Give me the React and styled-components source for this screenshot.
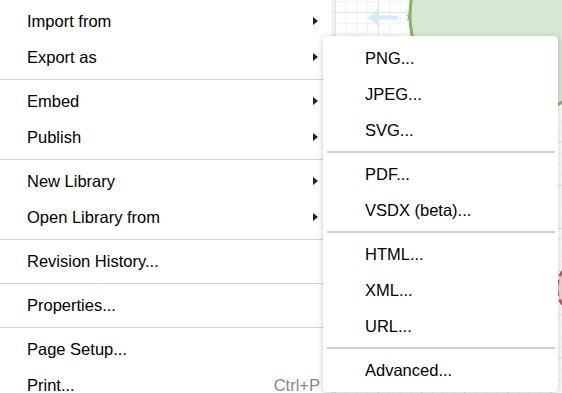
import styled, { createGlobalStyle } from 'styled-components';

const GlobalStyle = createGlobalStyle`
  html, body {
    margin: 0;
    padding: 0;
    overflow: hidden;
    background: #fff;
  }
  body {
    font-family: 'Liberation Sans', Arial, sans-serif;
  }
`;

const Stage = styled.div`
  position: relative;
  width: 562px;
  height: 393px;
  overflow: hidden;
  display: grid;
  grid-template-columns: 332px 1fr;
`;

const Menu = styled.div`
  background: #fff;
  padding-top: 3px;
  box-shadow: 1px 0 3px rgba(0, 0, 0, 0.12);
  z-index: 1;
`;

const Item = styled.div`
  height: 36px;
  display: flex;
  align-items: center;
  justify-content: space-between;
  padding: 0 ${(p) => (p.$shortcut ? '12px' : '14px')} 0 27px;
  font-size: 16.5px;
  color: #000;
  white-space: nowrap;
`;

const Arrow = styled.span`
  width: 0;
  height: 0;
  border-left: 5px solid #222;
  border-top: 4.5px solid transparent;
  border-bottom: 4.5px solid transparent;
`;

const Shortcut = styled.span`
  color: #888;
`;

const Divider = styled.div`
  height: 1px;
  margin: 4px 0 3px;
  background: #d4d4d4;
`;

const Canvas = styled.div`
  position: relative;
  background-color: #fff;
  background-image:
    linear-gradient(to right, #e2e2e2 1px, transparent 1px),
    linear-gradient(to bottom, #e2e2e2 1px, transparent 1px),
    linear-gradient(to right, #f1f1f1 1px, transparent 1px),
    linear-gradient(to bottom, #f1f1f1 1px, transparent 1px);
  background-size: 43.2px 43.2px, 43.2px 43.2px, 10.8px 10.8px, 10.8px 10.8px;
  background-position: 2.8px 12px, 2.8px 12px, 2.8px 12px, 2.8px 12px;
`;

const Shapes = styled.svg`
  display: block;
  width: 100%;
  height: 100%;
`;

const SubMenu = styled.div`
  position: absolute;
  left: 323px;
  top: 36px;
  width: 235px;
  height: 356px;
  box-sizing: border-box;
  padding-top: 4px;
  background: #fff;
  border-radius: 4px;
  box-shadow: 0 1px 6px rgba(0, 0, 0, 0.22);
  z-index: 2;
`;

const SubItem = styled.div`
  height: 36px;
  display: flex;
  align-items: center;
  padding-left: 42px;
  font-size: 16.5px;
  color: #000;
  white-space: nowrap;
`;

const SubDivider = styled.div`
  height: 2px;
  margin: 3px 3px 3px 4px;
  background: #cfcfcf;
`;

const mainMenu = [
  { label: 'Import from', sub: true },
  { label: 'Export as', sub: true },
  '-',
  { label: 'Embed', sub: true },
  { label: 'Publish', sub: true },
  '-',
  { label: 'New Library', sub: true },
  { label: 'Open Library from', sub: true },
  '-',
  { label: 'Revision History...' },
  '-',
  { label: 'Properties...' },
  '-',
  { label: 'Page Setup...' },
  { label: 'Print...', shortcut: 'Ctrl+P' },
];

const exportMenu = [
  'PNG...',
  'JPEG...',
  'SVG...',
  '-',
  'PDF...',
  'VSDX (beta)...',
  '-',
  'HTML...',
  'XML...',
  'URL...',
  '-',
  'Advanced...',
];

const CanvasShapes = () => (
  <Shapes viewBox="0 0 230 393">
    {/* faded edge arrow */}
    <path
      d="M36 12.5 L46 4 L46 10.5 L66 10.5 L66 14.5 L46 14.5 L46 21 Z"
      fill="#cfeaf9"
      opacity="0.9"
    />
    <path d="M75.5 10 L80.5 15 M80.5 10 L75.5 15" stroke="#29b6f2" strokeWidth="1.6" />
    {/* green ellipse */}
    <circle cx="179" cy="10" r="101" fill="#d5e8d4" stroke="#82b366" strokeWidth="3" />
    {/* red dashed shapes */}
    <circle
      cx="253"
      cy="283"
      r="28"
      fill="#f8cecc"
      stroke="#b85450"
      strokeWidth="2.5"
      strokeDasharray="6 4"
    />
    <circle
      cx="72"
      cy="412"
      r="21"
      fill="#f8cecc"
      stroke="#b85450"
      strokeWidth="2.5"
      strokeDasharray="6 4"
    />
  </Shapes>
);

const App = () => {
  return (
    <>
      <GlobalStyle />
      <Stage>
        <Menu>
          {mainMenu.map((entry, i) =>
            entry === '-' ? (
              <Divider key={i} />
            ) : (
              <Item key={i} $shortcut={!!entry.shortcut}>
                <span>{entry.label}</span>
                {entry.sub && <Arrow />}
                {entry.shortcut && <Shortcut>{entry.shortcut}</Shortcut>}
              </Item>
            )
          )}
        </Menu>
        <Canvas>
          <CanvasShapes />
        </Canvas>
        <SubMenu>
          {exportMenu.map((label, i) =>
            label === '-' ? <SubDivider key={i} /> : <SubItem key={i}>{label}</SubItem>
          )}
        </SubMenu>
      </Stage>
    </>
  );
};

export default App;
